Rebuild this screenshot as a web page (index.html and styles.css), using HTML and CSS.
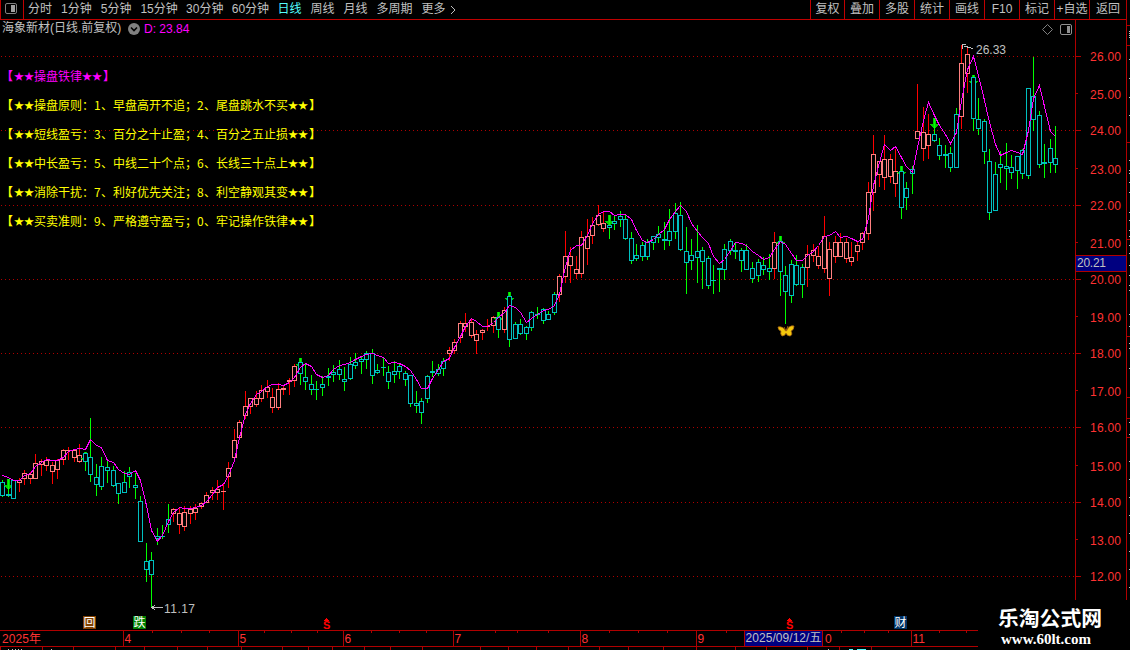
FILE: index.html
```html
<!DOCTYPE html>
<html lang="zh-cn">
<head>
  <meta charset="UTF-8">
  <title>海象新材 日线</title>
  <link rel="stylesheet" href="styles.css">
</head>
<body>
  <div class="toolbar">
    <div class="layout-btn">
      <svg width="12" height="11" viewBox="0 0 12 11"><rect x=".5" y=".5" width="11" height="10" rx="1.5" fill="none" stroke="#808080"/><rect x="6" y="2" width="4" height="7" fill="#a0a0a0"/></svg>
    </div>
    <div class="periods">
      <span>分时</span>
      <span>1分钟</span>
      <span>5分钟</span>
      <span class="wide">15分钟</span>
      <span class="wide">30分钟</span>
      <span class="wide">60分钟</span>
      <span class="active">日线</span>
      <span>周线</span>
      <span>月线</span>
      <span>多周期</span>
      <span class="more">更多<svg width="6" height="10" viewBox="0 0 6 10"><path d="M1 1l4 4-4 4" fill="none" stroke="#c0c0c0"/></svg></span>
    </div>
    <div class="tools">
      <span>复权</span>
      <span>叠加</span>
      <span>多股</span>
      <span>统计</span>
      <span>画线</span>
      <span>F10</span>
      <span>标记</span>
      <span>+自选</span>
      <span>返回</span>
    </div>
  </div>

  <div class="chart">
    <svg id="kline" width="1130" height="630" viewBox="0 20 1130 630"></svg>

    <div class="title">
      <span class="stock">海象新材(日线.前复权)</span>
      <svg width="12" height="12" viewBox="0 0 12 12"><circle cx="6" cy="6" r="6" fill="#808080"/><path d="M3 4.5l3 3 3-3" fill="none" stroke="#000" stroke-width="1.6"/></svg>
      <span class="value">D: 23.84</span>
    </div>

    <div class="notes">
      <p class="head"><em>【</em><i>★★</i>操盘铁律<i>★★</i><em>】</em></p>
      <p><em>【</em><i>★★</i>操盘原则：<b>1</b>、早盘高开不追；<b>2</b>、尾盘跳水不买<i>★★</i><em>】</em></p>
      <p><em>【</em><i>★★</i>短线盈亏：<b>3</b>、百分之十止盈；<b>4</b>、百分之五止损<i>★★</i><em>】</em></p>
      <p><em>【</em><i>★★</i>中长盈亏：<b>5</b>、中线二十个点；<b>6</b>、长线三十点上<i>★★</i><em>】</em></p>
      <p><em>【</em><i>★★</i>消除干扰：<b>7</b>、利好优先关注；<b>8</b>、利空静观其变<i>★★</i><em>】</em></p>
      <p><em>【</em><i>★★</i>买卖准则：<b>9</b>、严格遵守盈亏；<b>0</b>、牢记操作铁律<i>★★</i><em>】</em></p>
    </div>

    <div class="brand">
      <div class="brand-name">乐淘公式网</div>
      <div class="brand-url">www.60lt.com</div>
    </div>
  </div>

  <script src="script.js"></script>
</body>
</html>
```
FILE: styles.css
```css
body {
  margin: 0;
  width: 1130px;
  height: 650px;
  overflow: hidden;
  background: #000;
  color: #c0c0c0;
  font-family: "Liberation Sans", "Noto Sans CJK SC", sans-serif;
  font-size: 12px;
}
.toolbar {
  display: flex;
  box-sizing: border-box;
  width: 1127px;
  height: 20px;
  line-height: 19px;
  border-bottom: 1px solid #c00000;
  border-right: 1px solid #b00000;
  white-space: nowrap;
}
.layout-btn {
  box-sizing: border-box;
  width: 24px;
  padding: 3px 0 0 4px;
  border-left: 1px solid #c00000;
  border-right: 1px solid #c00000;
  line-height: 0;
}
.periods {
  display: flex;
  flex: 1;
  gap: 9px;
  padding-left: 4px;
}
.periods .wide {
  width: 36.7px;
}
.active {
  color: #54fcfc;
}
.more {
  display: flex;
  align-items: center;
  gap: 4px;
}
.tools {
  display: flex;
}
.tools span {
  box-sizing: border-box;
  width: 35px;
  border-left: 1px solid #c00000;
  text-align: center;
}
.tools span:first-child {
  width: 34px;
}
.tools span:last-child {
  width: 37px;
}
.chart {
  position: relative;
  height: 630px;
}
#kline {
  display: block;
}
.title {
  position: absolute;
  left: 2px;
  top: 0;
  display: flex;
  align-items: center;
  gap: 5px;
  height: 18px;
}
.stock {
  width: 121px;
  line-height: 16px;
  margin-top: -2px;
  white-space: nowrap;
}
.value {
  margin-left: -1px;
  color: #ff00ff;
}
.notes {
  position: absolute;
  left: 1px;
  top: 41px;
  color: #ffff00;
  font-family: "Noto Sans CJK SC", sans-serif;
  white-space: nowrap;
}
.notes p {
  display: flex;
  margin: 0;
  height: 29px;
  line-height: 29px;
}
.notes .head {
  color: #ff00ff;
}
.notes em {
  width: 13px;
  font-style: normal;
  font-weight: bold;
}
.notes em:last-child {
  padding-left: 1px;
}
.notes i {
  font-style: normal;
  font-size: 10px;
}
.notes b {
  width: 7px;
  font-weight: normal;
}
.brand {
  position: absolute;
  left: 978px;
  top: 580px;
  width: 152px;
  height: 50px;
  background: #000;
  color: #fff;
}
.brand-name {
  padding: 6px 0 0 20px;
  font-size: 20.8px;
  line-height: 26px;
  font-weight: bold;
}
.brand-url {
  padding-left: 23px;
  font: bold 15px/15px "Liberation Serif", serif;
}
text {
  font-size: 12px;
}
.grid {
  stroke: #b00000;
  stroke-dasharray: 1 3;
}
.line {
  fill: #b00000;
}
.price, .month {
  fill: #ff3232;
}
.mark {
  fill: #c0c0c0;
}
.up-wick {
  fill: #ff0000;
}
.down-wick {
  fill: #00ff00;
}
.up-body {
  fill: #000;
  stroke: #ff8080;
}
.down-body {
  fill: #000;
  stroke: #00c0c0;
}
.arrow {
  fill: #00d000;
}
.ma {
  fill: none;
  stroke: #ff00ff;
}
.badge {
  fill: #fff;
}
.dollar {
  fill: #ff0000;
  font-weight: bold;
  font-size: 11px;
}
.crisp {
  shape-rendering: crispEdges;
}
```
FILE: script.js
```js
// x, high, body top, body bottom, low, up, ma, sell arrow
const candles = [
  [2,480,482,495,496,0,475],[8,479,494,495,496,0,477,1],[13,480,480,498,498,0,480],[19,478,480,482,491,1,480],
  [24,470,473,478,484,1,475],[30,472,474,478,483,1,473],[35,454,463,478,478,1,466],[41,459,461,464,475,1,462],
  [46,457,460,465,470,1,459],[52,462,465,471,483,1,460],[57,459,460,469,478,1,460],[63,449,450,459,464,1,457],
  [68,447,450,450,459,1,451],[74,449,450,457,461,1,449],[79,444,455,461,462,1,448],[85,452,453,461,470,0,449,1],
  [90,418,457,474,481,0,439],[96,464,477,484,495,0,445],[101,457,466,486,489,0,447],[107,461,467,470,482,0,460],
  [113,466,470,485,486,0,462],[118,483,483,493,503,0,469],[124,471,482,492,492,0,473],[129,467,472,476,487,0,474],
  [135,473,485,487,498,0,470],[140,496,501,541,541,0,480],[146,543,561,569,581,0,505],[151,552,560,574,607,0,530],
  [157,528,536,538,544,0,541],[162,525,536,536,538,0,535],[168,504,519,524,532,0,521],[173,508,509,513,521,1,512],
  [179,508,513,524,533,1,507],[184,506,512,526,530,1,508],[190,506,509,513,523,1,508],[195,504,508,512,519,1,507],
  [201,502,503,506,508,1,505],[206,492,495,502,502,1,501],[212,487,490,492,499,1,494],[217,480,489,492,499,1,487],
  [223,484,491,491,509,1,484],[228,462,468,476,487,1,475],[234,429,440,457,461,1,460],[239,420,422,437,438,1,437],
  [245,391,406,415,418,1,414],[250,398,398,406,413,1,403],[256,391,398,404,406,1,394],[261,385,390,398,401,1,391],
  [267,380,387,391,397,1,386],[272,388,397,407,412,1,384],[278,383,389,407,409,1,384],[283,385,388,389,394,1,385],
  [289,378,380,381,394,1,382],[294,364,366,380,386,1,377],[300,358,362,373,384,0,367,1],[305,363,377,381,389,0,363],
  [311,375,384,389,394,0,366],[316,381,389,389,399,0,374],[322,376,384,387,395,0,377],[328,368,376,377,385,0,375],
  [333,365,372,374,381,0,369],[339,360,369,374,379,0,365],[344,367,379,381,390,0,364],[350,357,364,378,379,0,362],
  [355,353,362,365,368,0,359],[361,357,359,361,373,0,356],[366,351,353,359,368,0,354],[372,349,353,375,383,0,353],
  [377,364,370,372,373,0,355],[383,358,367,367,375,0,357],[388,366,372,381,388,0,363],[394,361,371,374,382,0,362],
  [399,363,366,371,378,0,363],[405,371,373,379,385,0,366],[410,375,375,403,406,0,370],[416,391,403,405,412,0,379],
  [421,398,401,412,423,0,388],[427,375,376,398,402,0,388],[432,361,371,372,376,0,378],[438,364,369,373,375,0,369],
  [443,358,361,368,375,0,361],[449,347,350,353,360,1,358],[454,339,342,350,353,1,347],[460,321,323,337,342,1,336],
  [465,313,323,326,331,1,326],[471,318,322,335,337,1,318],[476,330,334,340,353,1,321],[482,329,330,332,339,1,326],
  [487,319,326,326,330,1,326],[493,316,317,325,332,1,322],[498,312,317,329,337,0,317,1],[504,307,310,329,332,1,312],
  [509,292,296,339,346,0,305,1],[515,322,324,338,338,0,307],[520,319,324,333,334,0,312],[526,326,327,333,339,0,322],
  [531,311,312,327,330,0,318],[537,307,314,314,318,0,314],[543,308,309,320,323,0,310],[548,311,314,319,319,0,309],
  [554,292,294,312,314,0,305],[559,274,276,294,301,1,294],[565,231,256,276,282,1,266],[570,247,256,265,282,1,250],
  [576,256,269,273,278,1,245],[581,231,237,273,277,1,245],[587,219,236,248,264,1,235],[592,217,225,235,243,1,223],
  [598,205,215,224,225,1,214],[603,211,223,228,231,1,211],[609,215,225,227,238,0,211,1],[614,216,221,223,229,0,215],
  [620,211,216,219,226,0,214],[625,214,219,238,239,0,214],[631,232,238,260,263,0,219],[636,244,255,258,260,0,230],
  [642,242,245,256,260,0,240],[647,239,242,256,259,0,242],[653,236,236,242,249,0,239],[658,226,234,237,242,0,234],
  [664,222,239,240,249,0,229],[669,209,231,240,245,0,219],[675,203,213,231,238,0,211],[680,202,215,249,250,0,205],
  [686,227,251,262,293,0,211],[691,239,255,260,269,0,223],[697,225,251,257,282,0,231],[702,247,250,261,288,0,237],
  [708,256,258,285,288,0,243],[713,265,280,280,293,0,256],[719,268,268,269,291,0,263],[724,244,249,269,279,0,259],
  [730,239,241,250,254,0,250],[735,242,250,251,258,0,242],[741,248,250,260,271,0,243],[746,244,250,269,269,0,245],
  [752,262,268,278,282,0,251],[758,259,262,275,281,0,255],[763,257,265,269,274,0,259],[769,254,268,271,279,0,257],
  [774,232,242,268,278,1,249],[780,236,241,271,295,0,241,1],[785,266,275,291,323,0,244],[791,260,264,295,302,0,253],
  [796,255,265,284,285,0,260],[802,264,267,284,297,0,260],[807,245,254,267,286,1,255],[813,244,250,255,261,1,251],
  [818,246,256,265,268,1,245],[824,216,236,268,272,1,236],[829,242,249,278,295,1,235],[835,236,242,256,262,1,231],
  [840,233,242,256,256,1,237],[846,238,242,258,262,1,236],[851,242,257,261,265,1,238],[857,242,245,251,260,1,241],
  [862,232,233,242,249,1,239],[868,182,192,233,239,1,218],[873,135,154,192,210,1,185],[879,161,161,174,186,1,162],
  [884,135,159,177,189,1,144],[890,154,159,176,182,1,150],[895,149,171,183,196,1,146],[901,166,171,207,218,0,157,1],
  [906,182,188,197,209,0,166],[912,166,169,173,193,0,172],[917,84,131,138,138,1,147],[923,107,132,148,160,1,120],
  [928,114,134,145,158,1,102],[934,118,134,140,141,0,115,1],[939,138,145,155,159,0,125],[945,145,154,155,167,0,134],
  [950,147,153,167,171,0,143],[956,108,114,167,167,0,132],[961,45,63,116,128,1,100],[967,47,54,73,92,1,69],
  [973,75,77,118,130,0,56,1],[978,98,119,128,134,0,75],[984,119,121,151,163,0,100],[989,149,161,212,219,0,122],
  [995,162,174,210,210,0,144],[1000,151,164,167,182,0,155],[1006,143,166,168,189,0,152],[1011,155,167,172,178,0,150],
  [1017,156,156,170,188,0,152],[1022,149,150,173,178,0,154],[1028,88,88,175,178,0,130],[1033,57,96,119,130,0,98],
  [1039,111,115,164,167,0,85],[1044,144,162,163,177,0,106],[1050,139,148,162,172,0,131],[1055,126,158,164,172,0,136]
];

const prices = [
  [26,56,56],[25,93,94],[24,130,130],[23,168,169],[22,205,205],[21,242,243],[20,279,279],[19,316,317],
  [18,353,353],[17,390,391],[16,427,427],[15,465,466],[14,502,502],[13,539,540],[12,576,576]
];
const months = [[123,'4'],[238,'5'],[343,'6'],[453,'7'],[580,'8'],[696,'9'],[911,'11']];
const weekTicks = [152,181,209,264,291,317,371,399,426,495,517,548,609,638,667,726,841,864,888,939,966];
const lowerTicks = [0,42,73,115,144,177,207,241,282,308,332,364,390,422,480,508,536,568,599,628,663,696,735,766,807,839,871];
const sideRed = [25,45,142,239,336,397,418,437];
const sideWhite = [31,33,35,37,59,78,97,115,160,170,173,182,192,212,220,230,236,245,253,265,275,285,290,314,326,343,348,368,422,434,461,479,497,515,533,551,569,587];

function rect(x, y, w, h, cls) {
  return `<rect x="${x}" y="${y}" width="${w}" height="${h}" class="${cls}"/>`;
}
function label(x, y, str, cls, len) {
  const fit = len ? ` textLength="${len}"` : '';
  return `<text x="${x}" y="${y}" class="${cls}"${fit}>${str}</text>`;
}

let lines = '';
let texts = '';

// price axis
prices.forEach(([p, y, ty]) => {
  if (p % 2 === 0) {
    lines += `<line x1="1" x2="1075" y1="${y + 0.5}" y2="${y + 0.5}" class="grid"/>`;
    lines += rect(1076, y, 5, 1, 'line');
  } else {
    lines += rect(1076, y, 2, 1, 'line');
  }
  texts += label(1090, ty + 5, p.toFixed(2), 'price', 31);
});
lines += rect(1075, 20, 1, 580, 'line') + rect(1126, 20, 1, 580, 'line');
lines += '<rect x="1076" y="256" width="50" height="15" fill="#000080"/>';
lines += rect(1075, 255, 52, 1, 'line') + rect(1075, 271, 52, 1, 'line');
texts += label(1077, 267, '20.21', 'mark', 29);
sideRed.forEach(y => lines += rect(1127, y, 3, 1, 'line'));
sideWhite.forEach(y => lines += rect(1129, y, 1, 1, 'mark'));

// date axis
lines += rect(0, 630, 978, 1, 'line') + rect(0, 646, 978, 1, 'line');
months.forEach(([x, m]) => {
  lines += rect(x, 631, 1, 15, 'line');
  texts += label(x + 1.5, 643, m, 'month');
});
weekTicks.forEach(x => lines += rect(x, 631, 1, 2, 'line'));
lowerTicks.forEach(x => lines += rect(x, 647, 1, 3, 'line'));
lines += '<rect x="745" y="631" width="77" height="15" fill="#000080"/>';
lines += rect(744, 631, 1, 15, 'line') + rect(822, 631, 1, 15, 'line');
texts += label(2, 643, '2025年', 'month', 39);
texts += label(745.5, 642, '2025/09/12/五', 'mark', 76);
texts += label(825, 643, '0', 'month');
[8, 12, 15, 18, 21, 51, 828].forEach(x => lines += rect(x, 649, 1, 1, 'mark'));
lines += '<rect x="849" y="649" width="4" height="1" fill="#54fcfc"/><rect x="857" y="649" width="9" height="1" fill="#54fcfc"/>';

// candles
candles.forEach(([x, hi, top, bot, lo, up, ma, sell]) => {
  const side = up ? 'up' : 'down';
  if (sell) {
    lines += `<path class="arrow" d="M${x - 1} ${hi}h3v6h3l-4 5h-1l-4-5h3z"/>`;
  }
  lines += rect(x, hi, 1, lo - hi + 1, side + '-wick');
  if (bot > top) {
    lines += `<rect x="${x - 1.5}" y="${top + 0.5}" width="4" height="${bot - top}" class="${side}-body"/>`;
  } else {
    lines += `<path d="M${x - 2} ${top + 0.5}h5" class="${side}-body"/>`;
  }
});
lines += `<polyline class="ma" points="${candles.map(c => (c[0] + 0.5) + ',' + (c[6] + 0.5)).join(' ')}"/>`;

// high and low marks
lines += '<path d="M962 44.5h4M962.5 45v4M964 46l2 .5 3 1 4 1M152 607.5h11M155 605l-3 2.5 3 2.5" fill="none" stroke="#c0c0c0"/>';
texts += label(976, 54, '26.33', 'mark', 30);
texts += label(164, 613, '11.17', 'mark', 31);

// event badges
[[83, '#804000', '回'], [133, '#008000', '跌'], [894, '#003366', '财']].forEach(([x, color, ch]) => {
  lines += `<path d="M${x} 616h12l1 1v12h-13z" fill="${color}"/>`;
  texts += label(x + 0.5, 627, ch, 'badge');
});
[326, 789].forEach(x => {
  lines += `<path d="M${x - 2} 620.5l2.5-2.5 2.5 2.5z" fill="#f00"/>`;
  texts += label(x - 3, 629, 'S', 'dollar', 7);
});

// chart corner buttons and buy butterfly
const icons = `
  <path d="M1047.5 24.5l5 5-5 5-5-5z" fill="none" stroke="#808080"/>
  <rect x="1060.500" y="24.500" width="11" height="10" rx="1.500" fill="none" stroke="#909090"/>
  <rect x="1067" y="26" width="3" height="7" fill="#909090"/>
  <path d="M786 331l-2-4M786 331l2-5" stroke="#a06010" fill="none"/>
  <path d="M778 327q5-1 7.500 4h1q2.500-6 7.500-5q0 4-3 5q2 4-1 5q-3 0-4-3q-1 3-4 3q-2-2-1-5q-3-1-3-4z" fill="#f4c80c" stroke="#b06c10" stroke-width=".8"/>`;

document.getElementById('kline').innerHTML = `<g class="crisp">${lines}</g>${icons}${texts}`;
```
